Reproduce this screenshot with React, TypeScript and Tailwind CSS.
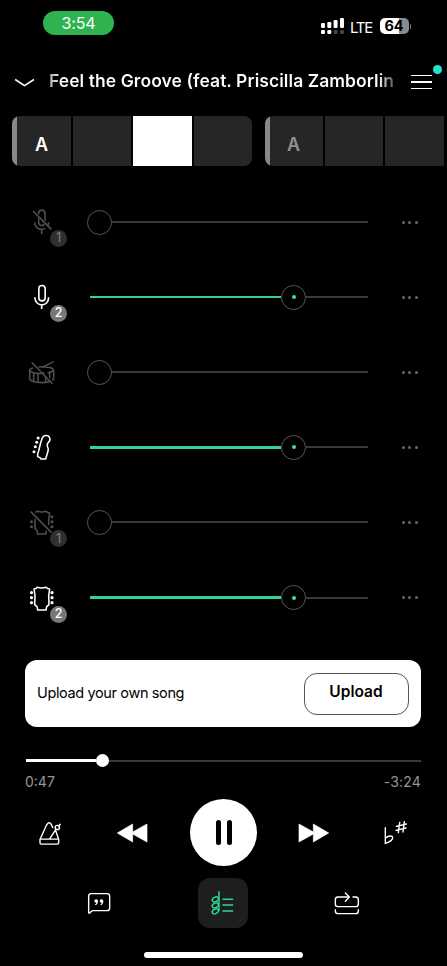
import React from "react";

type Track = {
  id: string;
  icon: React.ReactNode;
  badge?: number;
  active: boolean;
};

type IconProps = { className?: string };

function MicIcon() {
  return (
    <svg width="30" height="30" viewBox="36 261 90 90" fill="none" stroke="currentColor" strokeWidth="4.8">
      <rect x="71.5" y="271.5" width="19" height="46" rx="9.5" />
      <path d="M59.5 307C60 337 101 337 101 307M80 330V342" />
    </svg>
  );
}

function MicOffIcon() {
  return (
    <svg width="30" height="30" viewBox="36 36 90 90" fill="none" stroke="currentColor" strokeWidth="4.8">
      <path d="M71 58V55C71 42 90 42 90 55V77M71 69V82C71 92 83 95 88 87" />
      <path d="M59 82C60 102 78 107 91 100M101 82Q101 88 98 92M80 104V118" />
      <path d="M54 48L109 103" />
    </svg>
  );
}

function DrumOffIcon() {
  return (
    <svg width="30" height="30" viewBox="36 36 90 90" fill="none" stroke="currentColor" strokeWidth="4.6">
      <path d="M54 69C40 73 41 80 56 83Q74 87 88 84M98 83C120 80 121 69 98 67Q83 64 70 66" />
      <path d="M44 76V102C48 114 94 116 108 108M116 76V102L112 106M56 83V108M69 86V110M92 94V111M104 82V100" />
      <path d="M116 50L82 67M50 52L112 116" />
    </svg>
  );
}

function BassIcon() {
  return (
    <svg width="30" height="30" viewBox="36 261 90 90" fill="none" stroke="currentColor" strokeWidth="4.6" strokeLinejoin="round">
      <path d="M82 278C85 270 99 269 103 276C107 284 105 288 100 292Q96 297 97 303Q101 311 99 319L92 342H78L75 338L68 335Q67 326 71 318L77 293Z" />
      <g fill="currentColor" stroke="none">
        <circle cx="69.5" cy="279" r="4.6" />
        <circle cx="65" cy="292" r="4.6" />
        <circle cx="61" cy="305.5" r="4.6" />
        <circle cx="57" cy="320" r="4.6" />
      </g>
    </svg>
  );
}

function GuitarIcon() {
  return (
    <svg width="30" height="30" viewBox="36 262 90 90" fill="none" stroke="currentColor" strokeWidth="4.6" strokeLinejoin="round">
      <path d="M57 280Q63 280 67 275Q80 279 93 275Q97 280 104 280L101 300L102 327L95 333L93 343H68L66 333L59 327L60 300Z" />
      <g fill="currentColor" stroke="none">
        <circle cx="49.5" cy="291" r="4.8" />
        <circle cx="49.5" cy="306" r="4.8" />
        <circle cx="49.5" cy="321" r="4.8" />
        <circle cx="111" cy="291" r="4.8" />
        <circle cx="111" cy="306" r="4.8" />
        <circle cx="111" cy="321" r="4.8" />
      </g>
    </svg>
  );
}

function GuitarOffIcon() {
  return (
    <svg width="30" height="30" viewBox="36 262 90 90" fill="none" stroke="currentColor" strokeWidth="4.6" strokeLinejoin="round">
      <path d="M60 278L67 275Q80 279 93 275Q97 280 104 280L101 300V316M60 297V326L67 334V343H92L94 333" />
      <g fill="currentColor" stroke="none">
        <circle cx="49.5" cy="306" r="4.6" />
        <circle cx="49.5" cy="321" r="4.6" />
        <circle cx="111" cy="291" r="4.6" />
        <circle cx="111" cy="306" r="4.6" />
        <circle cx="111" cy="321" r="4.6" />
      </g>
      <path d="M47 276L109 338" />
    </svg>
  );
}

function MetronomeIcon() {
  return (
    <svg width="24" height="24" viewBox="69 76.5 72 72" fill="none" stroke="#fff" strokeWidth="4.2" strokeLinejoin="round" strokeLinecap="round">
      <path d="M122 105L131 132V142Q131 146 127 146H79Q75 146 75 142V132L95 88Q102 76 109 87L113 96M75 131H131M104 130L123 101M131 91L136 86" />
      <circle cx="127" cy="96" r="6.5" />
    </svg>
  );
}

function SkipIcon({ className }: IconProps) {
  return (
    <svg className={className} width="32" height="20" viewBox="0 0 96 60" fill="#fff" stroke="#fff" strokeWidth="2" strokeLinejoin="round">
      <path d="M3 3L46 27V3L92 30L46 57V33L3 57Z" />
    </svg>
  );
}

function FlatSharpIcon() {
  return (
    <svg width="26" height="26" viewBox="480 75 78 78" fill="none" stroke="#fff" strokeWidth="4.2" strokeLinecap="round">
      <path d="M487 98V145C496 142 509 136 509 128C509 121 497 121 488 129" />
      <path d="M530 82L526 113M544 80L540 111M520 94L550 87M519 106L549 99" />
    </svg>
  );
}

function LyricsIcon() {
  return (
    <svg width="24" height="24" viewBox="216 288 72 72" fill="none" stroke="#fff" strokeWidth="4.2" strokeLinejoin="round">
      <path d="M228 296H276Q284 296 284 304V339Q284 347 276 347H235Q231 347 228 350L224 354Q221 356 221 352V304Q221 296 228 296Z" />
      <g fill="#fff" stroke="none">
        <path d="M238 318A5.500 5.500 0 1 1 249 318Q249 328 241 331L240 328Q244 326 244 323Q238 323 238 318Z" />
        <path d="M254 318A5.500 5.500 0 1 1 265 318Q265 328 257 331L256 328Q260 326 260 323Q254 323 254 318Z" />
      </g>
    </svg>
  );
}

function ChordsIcon() {
  return (
    <svg width="26" height="26" viewBox="587 286 78 78" fill="none" stroke="#2bd994" strokeWidth="4.4" strokeLinecap="round">
      <path d="M614 291V347" />
      <ellipse cx="603" cy="314" rx="10" ry="6.5" transform="rotate(-25 603 314)" />
      <ellipse cx="603" cy="332" rx="10" ry="6.5" transform="rotate(-25 603 332)" />
      <ellipse cx="603" cy="350" rx="10" ry="6.5" transform="rotate(-25 603 350)" />
      <path d="M626 314H655M626 331H655M626 349H655" />
    </svg>
  );
}

function LoopIcon() {
  return (
    <svg width="26" height="26" viewBox="334 285 78 78" fill="none" stroke="#fff" strokeWidth="4.2" strokeLinecap="round" strokeLinejoin="round">
      <path d="M378 306H346Q338 306 338 314V327Q338 335 346 335H399Q407 335 407 327V314Q407 306 399 306H391" />
      <path d="M368 294L380 306L368 319M338 344V348Q338 356 346 356H399Q407 356 407 348V344" />
    </svg>
  );
}

const tracks: Track[] = [
  { id: "vocals-1", icon: <MicOffIcon />, badge: 1, active: false },
  { id: "vocals-2", icon: <MicIcon />, badge: 2, active: true },
  { id: "drums", icon: <DrumOffIcon />, active: false },
  { id: "bass", icon: <BassIcon />, active: true },
  { id: "guitar-1", icon: <GuitarOffIcon />, badge: 1, active: false },
  { id: "guitar-2", icon: <GuitarIcon />, badge: 2, active: true },
];

function StatusBar() {
  return (
    <div className="flex h-[46px] shrink-0 items-start pl-[43px] pt-[11px]">
      <div className="flex h-6 w-[71px] items-center justify-center rounded-full bg-[#2fb350] text-[16px] tracking-[-0.2px] text-white">
        3:54
      </div>
      <div className="ml-[207px] mt-[7px] flex h-4 items-center">
        <svg width="23" height="16" viewBox="0 0 23 16" fill="#fff">
          <rect x="0" y="5" width="4" height="5" rx="1.2" />
          <rect x="6.3" y="4" width="4" height="6" rx="1.2" />
          <rect x="12.6" y="2" width="4" height="8" rx="1.2" />
          <rect x="19" y="0" width="4" height="10" rx="1.2" />
          <rect x="0" y="12" width="4" height="4" rx="1.2" />
          <rect x="6.3" y="12" width="4" height="4" rx="1.2" />
          <rect x="12.6" y="12" width="4" height="4" rx="1.2" fill="#444" />
          <rect x="19" y="12" width="4" height="4" rx="1.2" fill="#444" />
        </svg>
        <span className="ml-[6px] w-[29.5px] pt-[3px] text-[15px] leading-4 tracking-[-1.2px] text-white">LTE</span>
        <div className="flex h-4 w-[29px] items-center justify-center rounded-[5px] bg-linear-to-r from-white from-64% to-[#8a8a8a] to-64% text-[14.5px] font-bold text-black">
          64
        </div>
        <div className="ml-px h-[5px] w-[1.5px] rounded-r bg-[#777]" />
      </div>
    </div>
  );
}

function Header() {
  return (
    <div className="flex h-[70px] shrink-0 items-center pl-[14px]">
      <svg className="mt-[4px]" width="22" height="10" viewBox="0 0 22 10" fill="none" stroke="#fff" strokeWidth="1.600">
        <path d="M1.200 1.500L10.500 7.600L20 1.500" strokeLinejoin="round" />
      </svg>
      <div className="ml-[13px] w-[346px] overflow-hidden whitespace-nowrap bg-linear-to-r from-[#aaa] to-white to-4% bg-clip-text text-[17.5px] font-semibold tracking-[0.06px] text-transparent mask-r-from-95% mask-r-to-102%">
        Feel the Groove (feat. Priscilla Zamborlin
      </div>
      <div className="relative ml-[16px] mt-[2px] flex w-[21px] flex-col gap-[5px]">
        <div className="h-[1.5px] bg-white" />
        <div className="h-[1.5px] bg-white" />
        <div className="h-[1.5px] bg-white" />
        <div className="absolute -right-[10px] -top-[10px] size-[9px] rounded-full bg-[#2ae0cf]" />
      </div>
    </div>
  );
}

function Chords() {
  return (
    <div className="flex h-[50px] shrink-0 gap-[13px] overflow-hidden pl-3 text-[18px] font-semibold">
      <div className="flex w-[240px] shrink-0 gap-[2px] overflow-hidden rounded-[8px]">
        <div className="flex w-[59px] items-center justify-center border-l-[5px] border-[#888] bg-[#262626] pt-[6px] pr-[5px] text-white">A</div>
        <div className="w-[58px] bg-[#262626]" />
        <div className="w-[59px] bg-white" />
        <div className="w-[58px] bg-[#262626]" />
      </div>
      <div className="flex w-[240px] shrink-0 gap-[2px] overflow-hidden rounded-[8px]">
        <div className="flex w-[58px] items-center justify-center border-l-[5px] border-[#888] bg-[#262626] pt-[6px] pr-[6px] text-[#929292]">A</div>
        <div className="w-[58px] bg-[#262626]" />
        <div className="w-[59px] bg-[#262626]" />
        <div className="w-[58px] bg-black" />
      </div>
    </div>
  );
}

function TrackRow({ icon, badge, active }: Track) {
  return (
    <div className="flex h-[75.1px] items-center pl-[27px]">
      <div className={active ? "relative text-white" : "relative text-[#505050]"}>
        {icon}
        {badge && (
          <span
            className={`absolute left-[23px] top-[23px] flex size-[17px] items-center justify-center rounded-full text-[12.5px] font-medium ${
              active ? "bg-[#777] text-white" : "bg-[#303030] text-[#777]"
            }`}
          >
            {badge}
          </span>
        )}
      </div>
      {active ? (
        <div className="ml-[33px] flex w-[278px] items-center">
          <div className="h-[2.5px] w-[191px] bg-[#35d0a0]" />
          <div className="flex size-[25px] items-center justify-center rounded-full border-[1.5px] border-[#555]">
            <div className="size-[4px] rounded-full bg-[#45dfaa]" />
          </div>
          <div className="h-[2px] flex-1 bg-[#3a3a3a]" />
        </div>
      ) : (
        <div className="ml-[30px] flex w-[281px] items-center">
          <div className="size-[25px] rounded-full border-[1.5px] border-[#555]" />
          <div className="h-[2px] flex-1 bg-[#3a3a3a]" />
        </div>
      )}
      <div className="ml-[34px] flex gap-[3.4px]">
        <div className="size-[3px] rounded-full bg-[#686868]" />
        <div className="size-[3px] rounded-full bg-[#686868]" />
        <div className="size-[3px] rounded-full bg-[#686868]" />
      </div>
    </div>
  );
}

function UploadCard() {
  return (
    <div className="ml-[25px] mt-[25px] flex h-[67px] w-[396px] shrink-0 items-center justify-between rounded-[12px] bg-white pl-3 pr-[12px] text-black">
      <span className="pb-[2px] text-[14.5px] tracking-[-0.37px]">Upload your own song</span>
      <button className="h-[42px] w-[105px] rounded-[13px] border-[1.5px] border-[#555] pb-[3px] pr-px text-[15.5px] font-semibold">
        Upload
      </button>
    </div>
  );
}

function Progress() {
  return (
    <div className="ml-[26px] mt-[27px] w-[395px] shrink-0">
      <div className="flex h-[13px] items-center">
        <div className="h-[2.5px] w-[70px] bg-white" />
        <div className="size-[12.5px] rounded-full bg-white" />
        <div className="h-[2px] flex-1 bg-[#3a3a3a]" />
      </div>
      <div className="mt-[5px] flex justify-between text-[14px] leading-5 text-[#969696]">
        <span className="-ml-px">0:47</span>
        <span className="tracking-[0.2px]">-3:24</span>
      </div>
    </div>
  );
}

export default function App() {
  return (
    <div className="flex h-[966px] w-[447px] flex-col overflow-hidden bg-black font-['Inter',sans-serif]">
      <StatusBar />
      <Header />
      <Chords />
      <div className="mt-[18.5px] shrink-0">
        {tracks.map((t) => (
          <TrackRow key={t.id} {...t} />
        ))}
      </div>
      <UploadCard />
      <Progress />
      <div className="mt-[7px] flex h-[67px] shrink-0 items-center pl-[38px]">
        <MetronomeIcon />
        <SkipIcon className="ml-[54px] -scale-x-100" />
        <div className="ml-[42px] flex size-[67px] items-center justify-center gap-[6px] rounded-full bg-white">
          <div className="h-[25px] w-[5px] rounded-full bg-black" />
          <div className="h-[25px] w-[5px] rounded-full bg-black" />
        </div>
        <SkipIcon className="ml-[41px]" />
        <div className="ml-[53px]">
          <FlatSharpIcon />
        </div>
      </div>
      <div className="mt-[12px] flex h-[50px] shrink-0 items-center pl-[87px]">
        <LyricsIcon />
        <div className="ml-[87px] flex size-[50px] items-center justify-center rounded-[12px] bg-[#1e1e1e]">
          <ChordsIcon />
        </div>
        <div className="ml-[86px]">
          <LoopIcon />
        </div>
      </div>
      <div className="ml-[144px] mt-[24px] h-[6px] w-[159px] shrink-0 rounded-full bg-white" />
    </div>
  );
}
